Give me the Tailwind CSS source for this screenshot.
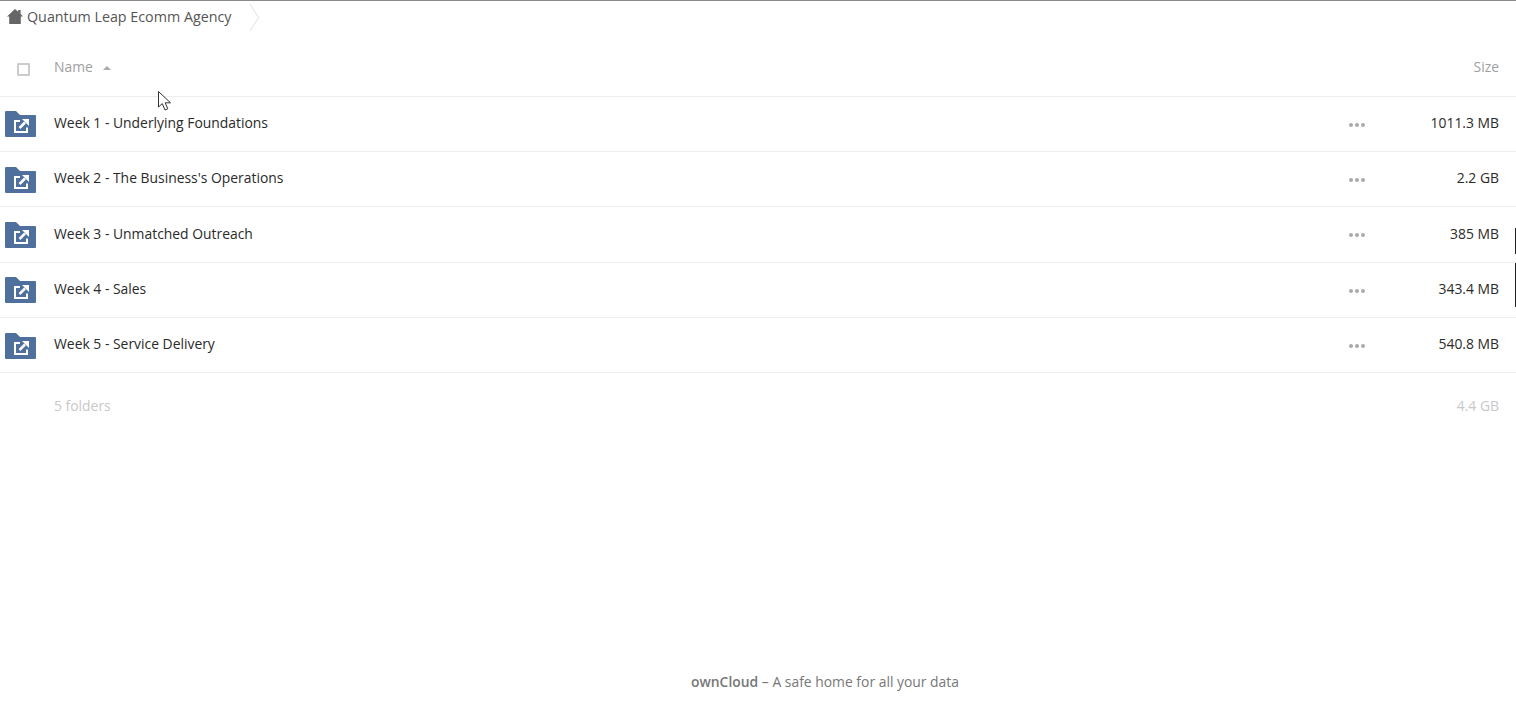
<!DOCTYPE html>
<html><head><meta charset="utf-8"><script src="https://cdn.jsdelivr.net/npm/@tailwindcss/browser@4"></script></head>
<body class="bg-white h-[720px] w-[1516px] overflow-hidden relative flex flex-col font-['Open_Sans',sans-serif] text-[13.9px] text-[#2a2a2a]">
<div class="h-px bg-[#8a8a8a]"></div>
<div class="h-[33px] flex items-center">
<svg class="ml-[7px] -mt-[2px]" width="16" height="15" viewBox="0 0 16 15"><path d="M8 0 L0 7.5 H2.2 V15 H13.8 V7.5 H16 L13.6 5 V1 H11.2 V2.8 Z" fill="#666"/></svg>
<span class="ml-[4px] -mt-[1px] text-[14.3px] text-[#555]">Quantum Leap Ecomm Agency</span>
<svg class="ml-[17px]" width="11" height="27" viewBox="0 0 11 27"><path d="M1 0 L9.5 13.5 L1 27" fill="none" stroke="#e0e0e0"/></svg>
</div>
<div class="h-[62.5px] flex items-center border-b border-[#eee] text-[#a0a0a0] pt-[4px]">
<span class="ml-[17px] mt-[5px] w-[13px] h-[13px] border-2 border-[#ccc] rounded-[1px]"></span>
<span class="ml-[24px] mt-[2px]">Name</span>
<svg class="ml-[10px] mt-[2px]" width="8" height="4" viewBox="0 0 8 4"><path d="M0 4 L4 0 L8 4 Z" fill="#aaa"/></svg>
<span class="ml-auto mr-[17px] mt-[2px]">Size</span>
</div>
<div class="flex flex-col">
<div class="h-[55.4px] flex items-center border-b border-[#eee]">
<svg class="ml-[5px] mt-[1px]" width="31" height="26" viewBox="0 0 31 26"><path d="M1 0 H11 L15 4 H30 A1 1 0 0 1 31 5 V25 A1 1 0 0 1 30 26 H1 A1 1 0 0 1 0 25 V1 A1 1 0 0 1 1 0 Z" fill="#4f6f9c"/><path d="M15 10 H10 V21 H22 V16.5" fill="none" stroke="#fff" stroke-width="2"/><path d="M14.5 17 L20 11.5" fill="none" stroke="#fff" stroke-width="2.5"/><path d="M17 8 H24 V15 Z" fill="#fff"/></svg>
<span class="ml-[18px] -mt-[1px]">Week 1 - Underlying Foundations</span>
<span class="ml-auto flex gap-[2px] mt-[2px] mr-[34px]"><i class="size-[4px] rounded-full bg-[#aaa]"></i><i class="size-[4px] rounded-full bg-[#aaa]"></i><i class="size-[4px] rounded-full bg-[#aaa]"></i></span>
<span class="w-[100px] text-right mr-[17px] -mt-[1px]">1011.3 MB</span>
</div>
<div class="h-[55.4px] flex items-center border-b border-[#eee]">
<svg class="ml-[5px] mt-[1px]" width="31" height="26" viewBox="0 0 31 26"><path d="M1 0 H11 L15 4 H30 A1 1 0 0 1 31 5 V25 A1 1 0 0 1 30 26 H1 A1 1 0 0 1 0 25 V1 A1 1 0 0 1 1 0 Z" fill="#4f6f9c"/><path d="M15 10 H10 V21 H22 V16.5" fill="none" stroke="#fff" stroke-width="2"/><path d="M14.5 17 L20 11.5" fill="none" stroke="#fff" stroke-width="2.5"/><path d="M17 8 H24 V15 Z" fill="#fff"/></svg>
<span class="ml-[18px] -mt-[1px]">Week 2 - The Business's Operations</span>
<span class="ml-auto flex gap-[2px] mt-[2px] mr-[34px]"><i class="size-[4px] rounded-full bg-[#aaa]"></i><i class="size-[4px] rounded-full bg-[#aaa]"></i><i class="size-[4px] rounded-full bg-[#aaa]"></i></span>
<span class="w-[100px] text-right mr-[17px] -mt-[1px]">2.2 GB</span>
</div>
<div class="h-[55.4px] flex items-center border-b border-[#eee]">
<svg class="ml-[5px] mt-[1px]" width="31" height="26" viewBox="0 0 31 26"><path d="M1 0 H11 L15 4 H30 A1 1 0 0 1 31 5 V25 A1 1 0 0 1 30 26 H1 A1 1 0 0 1 0 25 V1 A1 1 0 0 1 1 0 Z" fill="#4f6f9c"/><path d="M15 10 H10 V21 H22 V16.5" fill="none" stroke="#fff" stroke-width="2"/><path d="M14.5 17 L20 11.5" fill="none" stroke="#fff" stroke-width="2.5"/><path d="M17 8 H24 V15 Z" fill="#fff"/></svg>
<span class="ml-[18px] -mt-[1px]">Week 3 - Unmatched Outreach</span>
<span class="ml-auto flex gap-[2px] mt-[2px] mr-[34px]"><i class="size-[4px] rounded-full bg-[#aaa]"></i><i class="size-[4px] rounded-full bg-[#aaa]"></i><i class="size-[4px] rounded-full bg-[#aaa]"></i></span>
<span class="w-[100px] text-right mr-[17px] -mt-[1px]">385 MB</span>
</div>
<div class="h-[55.4px] flex items-center border-b border-[#eee]">
<svg class="ml-[5px] mt-[1px]" width="31" height="26" viewBox="0 0 31 26"><path d="M1 0 H11 L15 4 H30 A1 1 0 0 1 31 5 V25 A1 1 0 0 1 30 26 H1 A1 1 0 0 1 0 25 V1 A1 1 0 0 1 1 0 Z" fill="#4f6f9c"/><path d="M15 10 H10 V21 H22 V16.5" fill="none" stroke="#fff" stroke-width="2"/><path d="M14.5 17 L20 11.5" fill="none" stroke="#fff" stroke-width="2.5"/><path d="M17 8 H24 V15 Z" fill="#fff"/></svg>
<span class="ml-[18px] -mt-[1px]">Week 4 - Sales</span>
<span class="ml-auto flex gap-[2px] mt-[2px] mr-[34px]"><i class="size-[4px] rounded-full bg-[#aaa]"></i><i class="size-[4px] rounded-full bg-[#aaa]"></i><i class="size-[4px] rounded-full bg-[#aaa]"></i></span>
<span class="w-[100px] text-right mr-[17px] -mt-[1px]">343.4 MB</span>
</div>
<div class="h-[55.4px] flex items-center border-b border-[#eee]">
<svg class="ml-[5px] mt-[1px]" width="31" height="26" viewBox="0 0 31 26"><path d="M1 0 H11 L15 4 H30 A1 1 0 0 1 31 5 V25 A1 1 0 0 1 30 26 H1 A1 1 0 0 1 0 25 V1 A1 1 0 0 1 1 0 Z" fill="#4f6f9c"/><path d="M15 10 H10 V21 H22 V16.5" fill="none" stroke="#fff" stroke-width="2"/><path d="M14.5 17 L20 11.5" fill="none" stroke="#fff" stroke-width="2.5"/><path d="M17 8 H24 V15 Z" fill="#fff"/></svg>
<span class="ml-[18px] -mt-[1px]">Week 5 - Service Delivery</span>
<span class="ml-auto flex gap-[2px] mt-[2px] mr-[34px]"><i class="size-[4px] rounded-full bg-[#aaa]"></i><i class="size-[4px] rounded-full bg-[#aaa]"></i><i class="size-[4px] rounded-full bg-[#aaa]"></i></span>
<span class="w-[100px] text-right mr-[17px] -mt-[1px]">540.8 MB</span>
</div>
</div>
<div class="flex justify-between pl-[54px] pr-[17px] pt-[22.5px] text-[#c8c8c8]"><span>5 folders</span><span>4.4 GB</span></div>
<div class="mt-auto pb-[27px] pl-[134px] text-center text-[#777]"><span class="font-semibold">ownCloud</span> – A safe home for all your data</div>
<div class="absolute left-[1515px] top-[228px] w-px h-[26px] bg-[#222]"></div>
<div class="absolute left-[1515px] top-[263px] w-px h-[44px] bg-[#222]"></div>
<svg class="absolute left-[157px] top-[90px]" width="16" height="22" viewBox="0 0 16 22"><path d="M1.5 1.5 V17 L5.3 13.6 L8 20 L10.8 18.8 L8.2 12.8 L13.5 12.8 Z" fill="#fff" stroke="#333" stroke-width="1"/></svg>
</body></html>
